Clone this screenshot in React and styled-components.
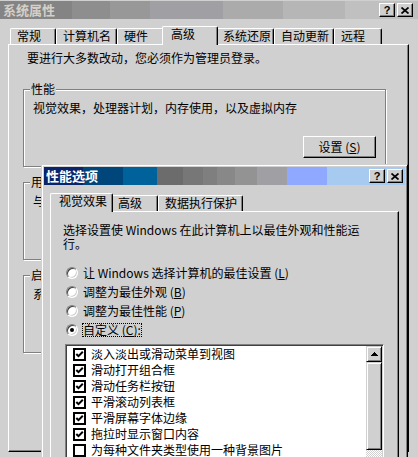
import React from 'react'
import styled, { createGlobalStyle, css } from 'styled-components'

const FACE = '#d0d0d0'

const GlobalStyle = createGlobalStyle`
  html, body { margin: 0; padding: 0; }
  body {
    background: ${FACE};
    font-family: "Noto Sans CJK SC", "Noto Sans", sans-serif;
    font-size: 12px;
    color: #000;
  }
`

const raised = css`
  box-sizing: border-box;
  border: 1px solid;
  border-color: #fff #000 #000 #fff;
  box-shadow: inset -1px -1px 0 #808080;
  background: ${FACE};
`

const sunken = css`
  border: 1px solid;
  border-color: #808080 #fff #fff #808080;
  box-shadow: inset 1px 1px 0 #404040, inset -1px -1px 0 ${FACE};
`

const inactiveBar = `linear-gradient(to right, #848484 0 72px, #8e8e8e 72px 110px, #989898 110px 150px, #a0a0a4 150px 223px, #ababab 223px 283px, #b6b6b6 283px 345px, #c0c0c0 345px)`
const activeBar = `linear-gradient(to right, #0a246a 0 39px, #00467a 39px 79px, #00629a 79px 113px, #6c6c6c 113px 139px, #777777 139px 159px, #7f7f7f 159px 173px, #888888 173px 191px, #939393 191px 213px, #a0a0a4 213px 243px, #8ea9ff 243px 283px, #a6caf0 283px)`

const Desktop = styled.div`
  position: relative;
  width: 418px;
  height: 457px;
  overflow: hidden;
  background: ${FACE};
  line-height: 14px;
`

const OuterWindow = styled.div`
  display: flex;
  flex-direction: column;
  width: 418px;
  padding-top: 1px;
  box-sizing: border-box;
`

const Dialog = styled.div`
  position: absolute;
  left: 41px;
  top: 164px;
  width: 367px;
  height: 380px;
  box-sizing: border-box;
  display: flex;
  flex-direction: column;
  padding: 2px;
  border: 1px solid;
  border-color: ${FACE} #000 #000 ${FACE};
  box-shadow: inset 1px 1px 0 #fff, inset -1px -1px 0 #808080;
  background: ${FACE};
`

const TitleBar = styled.div`
  display: flex;
  align-items: center;
  height: 18px;
  flex: none;
  padding: 0 ${p => p.$right}px 0 ${p => p.$left}px;
  background: ${p => (p.$active ? activeBar : inactiveBar)};
  color: ${p => (p.$active ? '#fff' : '#d4d0c8')};
`

const TitleText = styled.span`
  flex: 1;
  font-size: 13px;
  font-weight: bold;
  line-height: 18px;
  white-space: nowrap;
`

const TitleButtons = styled.div`
  display: flex;
  gap: 2px;
`

const TitleButton = styled.div`
  ${raised}
  width: 16px;
  height: 14px;
  display: grid;
  place-items: center;
  color: #000;
  font: bold 11px/1 "Liberation Sans", Arial, sans-serif;
`

const OuterBody = styled.div`
  display: flex;
  flex-direction: column;
  padding: 7px 0 0 8px;
`

const DialogBody = styled.div`
  flex: 1;
  display: flex;
  flex-direction: column;
  padding: 8px 6px 0;
`

const TabStrip = styled.div`
  display: flex;
  align-items: flex-end;
  height: 18px;
  padding-left: 2px;
`

const Tab = styled.div`
  box-sizing: border-box;
  flex: none;
  width: ${p => p.$w + (p.$active ? 4 : 0)}px;
  height: ${p => (p.$active ? 19 : 16)}px;
  margin: ${p => (p.$active ? '0 -2px -1px' : '0')};
  padding-left: ${p => (p.$active ? 8 : 6)}px;
  border: 1px solid;
  border-bottom: none;
  border-color: #fff #000 #000 #fff;
  border-radius: 2px 2px 0 0;
  box-shadow: inset -1px 0 0 #808080;
  background: ${FACE};
  white-space: nowrap;
  line-height: 14px;
  ${p => p.$active && css`
    position: relative;
    z-index: 1;
  `}
`

const TabPanel = styled.div`
  box-sizing: border-box;
  display: flex;
  flex-direction: column;
  border: 1px solid;
  border-color: #fff #000 #000 #fff;
  box-shadow: inset -1px -1px 0 #808080;
  background: ${FACE};
`

const OuterPanel = styled(TabPanel)`
  width: 401px;
  height: 408px;
  padding: 6px 0 0 14px;
  align-items: flex-start;
`

const InnerPanel = styled(TabPanel)`
  flex: 1;
  padding: 11px 14px 0;
`

const Note = styled.p`
  margin: 0 0 17px 4px;
  white-space: nowrap;
`

const Group = styled.fieldset`
  box-sizing: border-box;
  width: 363px;
  margin: 0 0 8px;
  padding: 5px 9px 8px;
  border: 1px solid #808080;
  box-shadow: inset 1px 1px 0 #fff, 1px 1px 0 #fff;
`

const Legend = styled.legend`
  padding: 0 1px;
  margin-left: -3px;
  line-height: 14px;
  background: ${FACE};
`

const GroupText = styled.div`
  white-space: nowrap;
`

/* the button area keeps its height even where the dialog hides the button */
const ButtonRow = styled.div`
  display: flex;
  justify-content: flex-end;
  height: 22px;
  margin-top: 21px;
`

const PushButton = styled.button`
  ${raised}
  width: 73px;
  height: 22px;
  padding: 0;
  font: inherit;
  line-height: 14px;
  color: #000;
  white-space: nowrap;
`

const Key = styled.u`
  text-underline-offset: 1px;
`

const Intro = styled.p`
  margin: 0 0 0 -2px;
  max-width: 298px;
`

const Options = styled.div`
  display: flex;
  flex-direction: column;
  margin: 12px 0 0 1px;
`

const OptionRow = styled.div`
  display: flex;
  align-items: center;
  gap: 5px;
  height: 19px;
  white-space: nowrap;
`

const Radio = styled.span`
  box-sizing: border-box;
  flex: none;
  width: 12px;
  height: 12px;
  border-radius: 50%;
  ${sunken}
  background: #fff;
  display: grid;
  place-items: center;
  &::after {
    content: '';
    width: 4px;
    height: 4px;
    border-radius: 50%;
    background: ${p => (p.$on ? '#000' : 'transparent')};
  }
`

const OptionText = styled.span`
  line-height: ${p => (p.$focus ? 12 : 14)}px;
  outline: ${p => (p.$focus ? '1px dotted #000' : 'none')};
`

const ListBox = styled.div`
  display: flex;
  height: 150px;
  margin-top: 5px;
  padding: 1px;
  ${sunken}
  background: #fff;
`

const ListItems = styled.div`
  flex: 1;
  display: flex;
  flex-direction: column;
  padding-left: 6px;
  overflow: hidden;
`

const ListRow = styled.div`
  display: flex;
  align-items: center;
  gap: 5px;
  height: 16px;
  flex: none;
  white-space: nowrap;
`

const CheckBox = styled.span`
  box-sizing: border-box;
  flex: none;
  width: 13px;
  height: 13px;
  border: 2px solid #000;
  background: #fff;
  display: grid;
  place-items: center;
`

const ScrollBar = styled.div`
  display: flex;
  flex-direction: column;
  width: 16px;
  flex: none;
`

const ScrollPart = styled.div`
  box-sizing: border-box;
  height: ${p => p.$h}px;
  flex: none;
  display: grid;
  place-items: center;
  border: 1px solid;
  border-color: ${FACE} #000 #000 ${FACE};
  box-shadow: inset 1px 1px 0 #fff, inset -1px -1px 0 #808080;
  background: ${FACE};
`

const Track = styled.div`
  flex: 1;
  background: repeating-conic-gradient(#fff 0 25%, ${FACE} 0 50%) 0 0 / 2px 2px;
`

const CloseGlyph = () => (
  <svg width="8" height="7" viewBox="0 0 8 7">
    <path d="M0.5 0.5 L7.5 6.5 M7.5 0.5 L0.5 6.5" stroke="#000" strokeWidth="1.7" fill="none" />
  </svg>
)

const CheckGlyph = () => (
  <svg width="9" height="9" viewBox="0 0 9 9">
    <path d="M1.3 4 L3.5 6.2 L7.8 1.8" stroke="#000" strokeWidth="2" fill="none" />
  </svg>
)

const UpArrow = () => (
  <svg width="7" height="4" viewBox="0 0 7 4">
    <path d="M3 0h1v1h1v1h1v1h1v1H0V3h1V2h1V1h1z" fill="#000" />
  </svg>
)

const Caption = ({ active, left, right, title }) => (
  <TitleBar $active={active} $left={left} $right={right}>
    <TitleText>{title}</TitleText>
    <TitleButtons>
      <TitleButton>?</TitleButton>
      <TitleButton><CloseGlyph /></TitleButton>
    </TitleButtons>
  </TitleBar>
)

const outerTabs = [
  ['常规', 46],
  ['计算机名', 61],
  ['硬件', 47],
  ['高级', 52, true],
  ['系统还原', 58],
  ['自动更新', 60],
  ['远程', 48],
]

const innerTabs = [
  ['视觉效果', 59, true],
  ['高级', 47],
  ['数据执行保护', 85],
]

// only the first group's button lies outside the performance dialog
const groups = [
  ['性能', '视觉效果，处理器计划，内存使用，以及虚拟内存', 'S'],
  ['用户配置文件', '与您登录有关的桌面设置'],
  ['启动和故障恢复', '系统启动、系统失败和调试信息'],
]

const effects = [
  ['淡入淡出或滑动菜单到视图', true],
  ['滑动打开组合框', true],
  ['滑动任务栏按钮', true],
  ['平滑滚动列表框', true],
  ['平滑屏幕字体边缘', true],
  ['拖拉时显示窗口内容', true],
  ['为每种文件夹类型使用一种背景图片', false],
]

function App() {
  return (
    <Desktop>
      <GlobalStyle />
      <OuterWindow>
        <Caption title="系统属性" left={3} right={5} />
        <OuterBody>
          <TabStrip>
            {outerTabs.map(([label, w, active]) => (
              <Tab key={label} $w={w} $active={active}>{label}</Tab>
            ))}
          </TabStrip>
          <OuterPanel>
            <Note>要进行大多数改动，您必须作为管理员登录。</Note>
            {groups.map(([legend, text, key]) => (
              <Group key={legend}>
                <Legend>{legend}</Legend>
                <GroupText>{text}</GroupText>
                <ButtonRow>
                  {key && <PushButton>设置 (<Key>{key}</Key>)</PushButton>}
                </ButtonRow>
              </Group>
            ))}
          </OuterPanel>
        </OuterBody>
      </OuterWindow>

      <Dialog>
        <Caption active title="性能选项" left={2} right={2} />
        <DialogBody>
          <TabStrip>
            {innerTabs.map(([label, w, active]) => (
              <Tab key={label} $w={w} $active={active}>{label}</Tab>
            ))}
          </TabStrip>
          <InnerPanel>
            <Intro>选择设置使 Windows 在此计算机上以最佳外观和性能运行。</Intro>
            <Options>
              <OptionRow>
                <Radio />
                <OptionText>让 Windows 选择计算机的最佳设置 (<Key>L</Key>)</OptionText>
              </OptionRow>
              <OptionRow>
                <Radio />
                <OptionText>调整为最佳外观 (<Key>B</Key>)</OptionText>
              </OptionRow>
              <OptionRow>
                <Radio />
                <OptionText>调整为最佳性能 (<Key>P</Key>)</OptionText>
              </OptionRow>
              <OptionRow>
                <Radio $on />
                <OptionText $focus>自定义 (<Key>C</Key>):</OptionText>
              </OptionRow>
            </Options>
            <ListBox>
              <ListItems>
                {effects.map(([label, on]) => (
                  <ListRow key={label}>
                    <CheckBox>{on && <CheckGlyph />}</CheckBox>
                    {label}
                  </ListRow>
                ))}
              </ListItems>
              <ScrollBar>
                <ScrollPart $h={16}><UpArrow /></ScrollPart>
                <ScrollPart $h={88} />
                <Track />
              </ScrollBar>
            </ListBox>
          </InnerPanel>
        </DialogBody>
      </Dialog>
    </Desktop>
  )
}

export default App
